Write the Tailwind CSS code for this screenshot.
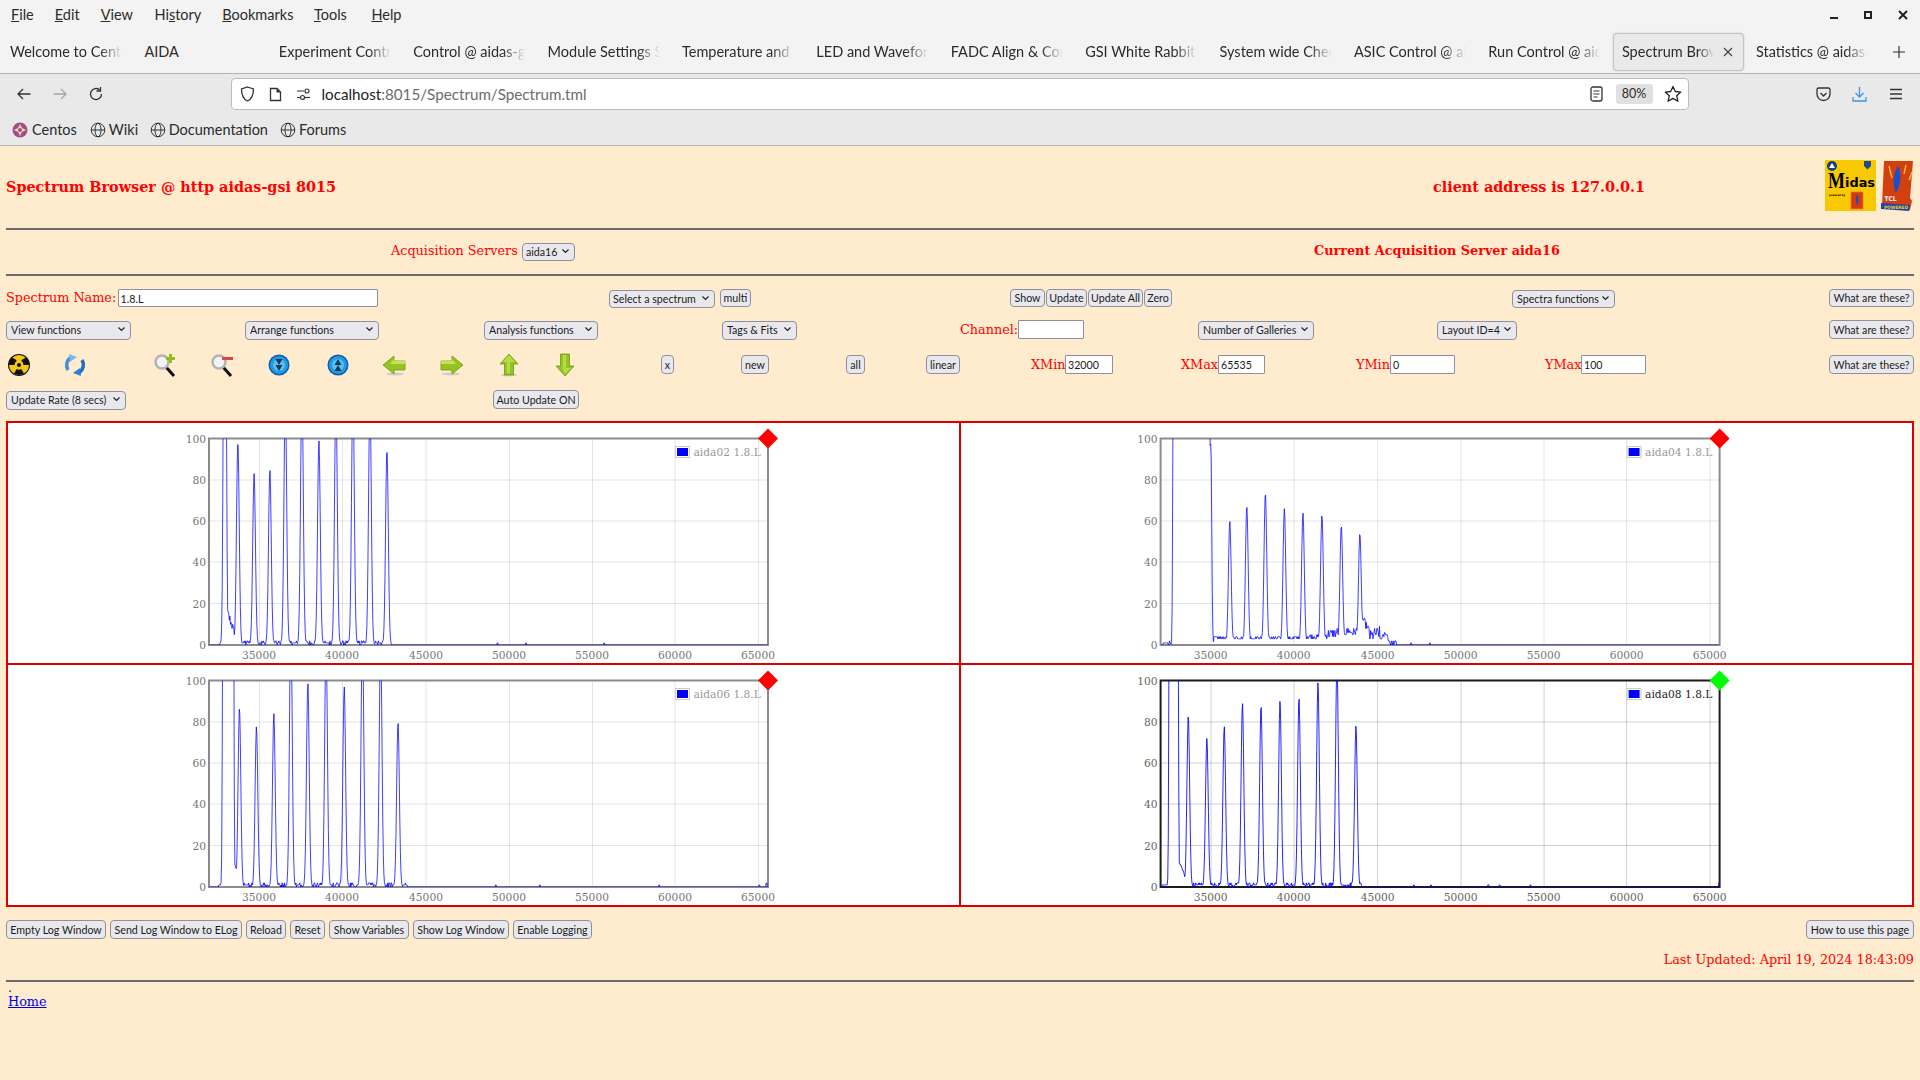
<!DOCTYPE html>
<html lang="en">
<head>
<meta charset="utf-8">
<title>Spectrum Browser</title>
<script src="https://cdn.jsdelivr.net/npm/@tailwindcss/browser@4"></script>
</head>
<body class="m-0 w-[1920px] h-[1080px] overflow-hidden bg-[#ffebcd] font-['DejaVu_Serif',serif] text-[12.8px]">

<!-- browser chrome -->
<div class="h-[147px] font-['Lato',sans-serif] text-[#2b2b2b]">
  <div class="h-[74px] bg-[#f3f3f3] border-b border-[#b3b3b3]">
    <div class="h-[30px] flex items-center text-[14.500px] pb-[1px]">
      <span class="ml-[11px]"><u>F</u>ile</span>
      <span class="ml-[21px]"><u>E</u>dit</span>
      <span class="ml-[21px]"><u>V</u>iew</span>
      <span class="ml-[21.500px]">Hi<u>s</u>tory</span>
      <span class="ml-[21px]"><u>B</u>ookmarks</span>
      <span class="ml-[20.500px]"><u>T</u>ools</span>
      <span class="ml-[24.500px]"><u>H</u>elp</span>
      <div class="ml-auto flex items-center mr-[12px]">
        <svg class="w-[10px] h-[10px]" viewBox="0 0 10 10"><rect x="1" y="7" width="8" height="2" fill="#222"/></svg>
        <svg class="w-[10px] h-[10px] ml-[24px]" viewBox="0 0 10 10"><rect x="2" y="2" width="6" height="6" fill="none" stroke="#222" stroke-width="2"/></svg>
        <svg class="w-[10px] h-[10px] ml-[25px]" viewBox="0 0 10 10"><path d="M1 1L9 9M9 1L1 9" stroke="#222" stroke-width="2"/></svg>
      </div>
    </div>
    <div class="h-[43px] flex items-center text-[14.500px]">
      <div class="w-[134.4px] pl-[10px] shrink-0"><div class="w-[112px] overflow-hidden whitespace-nowrap [mask-image:linear-gradient(to_right,black_80%,transparent)]">Welcome to CentOS</div></div>
      <div class="w-[134.4px] pl-[10px] shrink-0"><div class="w-[112px] overflow-hidden whitespace-nowrap">AIDA</div></div>
      <div class="w-[134.4px] pl-[10px] shrink-0"><div class="w-[112px] overflow-hidden whitespace-nowrap [mask-image:linear-gradient(to_right,black_80%,transparent)]">Experiment Control</div></div>
      <div class="w-[134.4px] pl-[10px] shrink-0"><div class="w-[112px] overflow-hidden whitespace-nowrap [mask-image:linear-gradient(to_right,black_80%,transparent)]">Control @ aidas-gsi</div></div>
      <div class="w-[134.4px] pl-[10px] shrink-0"><div class="w-[112px] overflow-hidden whitespace-nowrap [mask-image:linear-gradient(to_right,black_80%,transparent)]">Module Settings Summary</div></div>
      <div class="w-[134.4px] pl-[10px] shrink-0"><div class="w-[112px] overflow-hidden whitespace-nowrap [mask-image:linear-gradient(to_right,black_80%,transparent)]">Temperature and Voltage</div></div>
      <div class="w-[134.4px] pl-[10px] shrink-0"><div class="w-[112px] overflow-hidden whitespace-nowrap [mask-image:linear-gradient(to_right,black_80%,transparent)]">LED and Waveform</div></div>
      <div class="w-[134.4px] pl-[10px] shrink-0"><div class="w-[112px] overflow-hidden whitespace-nowrap [mask-image:linear-gradient(to_right,black_80%,transparent)]">FADC Align &amp; Control</div></div>
      <div class="w-[134.4px] pl-[10px] shrink-0"><div class="w-[112px] overflow-hidden whitespace-nowrap [mask-image:linear-gradient(to_right,black_80%,transparent)]">GSI White Rabbit Timing</div></div>
      <div class="w-[134.4px] pl-[10px] shrink-0"><div class="w-[112px] overflow-hidden whitespace-nowrap [mask-image:linear-gradient(to_right,black_80%,transparent)]">System wide Checks</div></div>
      <div class="w-[134.4px] pl-[10px] shrink-0"><div class="w-[112px] overflow-hidden whitespace-nowrap [mask-image:linear-gradient(to_right,black_80%,transparent)]">ASIC Control @ aidas</div></div>
      <div class="w-[134.6px] pl-[10px] shrink-0"><div class="w-[112px] overflow-hidden whitespace-nowrap [mask-image:linear-gradient(to_right,black_80%,transparent)]">Run Control @ aidas</div></div>
      <div class="w-[131px] h-[38px] shrink-0 flex items-center pl-[8px] bg-[#e9e9e9] border border-[#c4c4c4] rounded-[4px] shadow-[0_0_2px_rgba(0,0,0,0.2)]"><div class="w-[92px] overflow-hidden whitespace-nowrap [mask-image:linear-gradient(to_right,black_82%,transparent)]">Spectrum Browser</div><svg class="w-[10px] h-[10px] ml-[9px]" viewBox="0 0 10 10"><path d="M1 1L9 9M9 1L1 9" stroke="#444" stroke-width="1.2"/></svg></div>
      <div class="w-[149px] pl-[12px] shrink-0"><div class="w-[112px] overflow-hidden whitespace-nowrap [mask-image:linear-gradient(to_right,black_80%,transparent)]">Statistics @ aidas-gsi</div></div>
      <svg class="w-[12px] h-[12px] shrink-0" viewBox="0 0 12 12"><path d="M6 0V12M0 6H12" stroke="#333" stroke-width="1.2"/></svg>
    </div>
  </div>
  <div class="h-[72px] bg-[#e9e9e9] border-b border-[#b8b8b8]">
    <div class="h-[40px] flex items-center">
      <svg class="w-[16px] h-[16px] ml-[16px] shrink-0" viewBox="0 0 16 16"><path d="M14.5 8H2M7 3L2 8L7 13" fill="none" stroke="#333" stroke-width="1.3"/></svg>
      <svg class="w-[16px] h-[16px] ml-[20px] shrink-0" viewBox="0 0 16 16"><path d="M1.5 8H14M9 3L14 8L9 13" fill="none" stroke="#a5a5a5" stroke-width="1.3"/></svg>
      <svg class="w-[16px] h-[16px] ml-[20px] shrink-0" viewBox="0 0 16 16"><path d="M13.5 8A5.5 5.5 0 1 1 11.5 3.8M12.5 1V5H8.5" fill="none" stroke="#333" stroke-width="1.3"/></svg>
      <div class="ml-[127px] w-[1457.500px] h-[32px] shrink-0 bg-white border border-[#bdbdbd] rounded-[4px] flex items-center">
        <svg class="w-[15px] h-[16px] ml-[7.500px] shrink-0" viewBox="0 0 15 16"><path d="M7.5 1L13.5 3C13.5 9 12 13 7.5 15C3 13 1.5 9 1.5 3Z" fill="none" stroke="#333" stroke-width="1.3"/></svg>
        <svg class="w-[13px] h-[15px] ml-[14px] shrink-0" viewBox="0 0 13 15"><path d="M1.5 1.5H8L11.5 5V13.5H1.5Z" fill="none" stroke="#333" stroke-width="1.3"/><path d="M7.5 1.5V5.5H11.5" fill="#333"/></svg>
        <svg class="w-[15px] h-[14px] ml-[14px] shrink-0" viewBox="0 0 15 14"><path d="M1 4H8M1 10.500H4" stroke="#333" stroke-width="1.2"/><circle cx="11" cy="4" r="2" fill="none" stroke="#333" stroke-width="1.2"/><circle cx="6.500" cy="10.500" r="2" fill="none" stroke="#333" stroke-width="1.2"/><path d="M9 10.500H14" stroke="#333" stroke-width="1.2"/></svg>
        <span class="ml-[11px] text-[15.200px] whitespace-nowrap text-[#222]">localhost<span class="text-[#6c6c6c]">:8015/Spectrum/Spectrum.tml</span></span>
        <svg class="w-[13px] h-[16px] ml-auto shrink-0" viewBox="0 0 13 16"><rect x="1" y="1" width="11" height="14" rx="2" fill="none" stroke="#333" stroke-width="1.3"/><path d="M3.500 5H9.500M3.500 8H9.500M3.500 11H7.500" stroke="#333" stroke-width="1.2"/></svg>
        <div class="ml-[13px] w-[37px] h-[20px] bg-[#e0e0e0] rounded-[3px] text-[12.5px] flex items-center justify-center shrink-0">80%</div>
        <svg class="w-[18px] h-[18px] ml-[11px] mr-[6px] shrink-0" viewBox="0 0 18 18"><path d="M9 1.500L11.300 6.500L16.800 7.100L12.700 10.800L13.900 16.200L9 13.400L4.100 16.200L5.300 10.800L1.200 7.100L6.700 6.500Z" fill="none" stroke="#222" stroke-width="1.3" stroke-linejoin="round"/></svg>
      </div>
      <svg class="w-[15px] h-[15px] ml-[127.500px] shrink-0" viewBox="0 0 15 15"><path d="M1 2.500A1.500 1.500 0 0 1 2.500 1H12.500A1.500 1.500 0 0 1 14 2.500V7A6.500 6.500 0 0 1 1 7Z" fill="none" stroke="#333" stroke-width="1.3"/><path d="M4.500 6L7.500 9L10.500 6" fill="none" stroke="#333" stroke-width="1.3"/></svg>
      <svg class="w-[15px] h-[16px] ml-[21.400px] shrink-0" viewBox="0 0 15 16"><path d="M7.500 1V11M3.500 7L7.500 11L11.500 7M1 11V15H14V11" fill="none" stroke="#3f94e6" stroke-width="1.3"/></svg>
      <svg class="w-[14px] h-[12px] ml-[21.600px] shrink-0" viewBox="0 0 14 12"><path d="M1 1.500H13M1 6H13M1 10.500H13" stroke="#333" stroke-width="1.4"/></svg>
    </div>
    <div class="h-[31px] flex items-center text-[14.500px]">
      <svg class="w-[16px] h-[16px] ml-[12px] shrink-0" viewBox="0 0 16 16"><circle cx="8" cy="8" r="7.500" fill="#a14f8c"/><path d="M8 2L10 6L14 8L10 10L8 14L6 10L2 8L6 6Z" fill="#f0d7b0"/><circle cx="8" cy="8" r="2" fill="#a14f8c"/></svg>
      <span class="ml-[4px]">Centos</span>
      <svg class="w-[16px] h-[16px] ml-[13px] shrink-0" viewBox="0 0 16 16"><g fill="none" stroke="#333" stroke-width="1"><circle cx="8" cy="8" r="6.800"/><ellipse cx="8" cy="8" rx="3" ry="6.800"/><path d="M1.200 8H14.800"/></g></svg>
      <span class="ml-[3px]">Wiki</span>
      <svg class="w-[16px] h-[16px] ml-[11.500px] shrink-0" viewBox="0 0 16 16"><g fill="none" stroke="#333" stroke-width="1"><circle cx="8" cy="8" r="6.800"/><ellipse cx="8" cy="8" rx="3" ry="6.800"/><path d="M1.200 8H14.800"/></g></svg>
      <span class="ml-[3px]">Documentation</span>
      <svg class="w-[16px] h-[16px] ml-[12px] shrink-0" viewBox="0 0 16 16"><g fill="none" stroke="#333" stroke-width="1"><circle cx="8" cy="8" r="6.800"/><ellipse cx="8" cy="8" rx="3" ry="6.800"/><path d="M1.200 8H14.800"/></g></svg>
      <span class="ml-[3px]">Forums</span>
    </div>
  </div>
</div>

<!-- page -->
<div class="h-[81px] flex items-center text-[#ff0000] font-bold text-[14.400px]">
  <span class="ml-[6px] w-[1427px] shrink-0 whitespace-nowrap pb-[1px]">Spectrum Browser @ http aidas-gsi 8015</span>
  <span class="whitespace-nowrap w-[392px] shrink-0 pb-[1px]">client address is 127.0.0.1</span>
  <svg class="w-[51px] h-[51px] shrink-0 mb-[4px] font-normal" viewBox="0 0 51 51">
    <rect width="51" height="51" fill="#f8c800"/>
    <circle cx="7" cy="6" r="5" fill="#14427a"/><path d="M4 8L7 3L10 8Z" fill="#fff"/>
    <path d="M39 1H46V6L42.500 9.500L39 6Z" fill="#24488c"/>
    <text x="3" y="28" font-family="Liberation Serif" font-weight="700" font-size="24" fill="#000" textLength="17" lengthAdjust="spacingAndGlyphs">M</text>
    <text x="20" y="27" font-family="DejaVu Sans" font-weight="700" font-size="12" fill="#000" textLength="30" lengthAdjust="spacingAndGlyphs">idas</text>
    <text x="4" y="36" font-family="DejaVu Sans" font-size="2.800" fill="#000" font-weight="700" textLength="16" lengthAdjust="spacingAndGlyphs">powered by</text>
    <rect x="26" y="32" width="12" height="17" fill="#d53a12" stroke="#e8861a" stroke-width="0.800"/><path d="M32 34C30 38 31 42 32 46C34 41 34 37 32 34Z" fill="#1b4fb5"/>
  </svg>
  <svg class="ml-[5px] w-[33px] h-[52px] shrink-0 mb-[4px] font-normal" viewBox="0 0 33 52">
    <path d="M3 1H32L29 38L31 41L29 50L1 46Z" fill="#d43f10"/>
    <path d="M17 6C12 14 11 24 15 33C20 25 21 12 17 6Z" fill="#1b4fc5"/>
    <path d="M8 6L11 18M25 5L23 14M31 12L28 20" stroke="#f6b23a" stroke-width="1.500"/>
    <text x="3.500" y="41" font-family="DejaVu Sans" font-weight="700" font-size="6.500" fill="#fff" textLength="12" lengthAdjust="spacingAndGlyphs">TCL</text>
    <path d="M0 43L29 45L28 51L0 49Z" fill="#1a44b8"/>
    <text x="3" y="49" font-family="DejaVu Sans" font-weight="700" font-size="4.500" fill="#f8c800" textLength="24" lengthAdjust="spacingAndGlyphs">POWERED</text>
  </svg>
</div>
<div class="ml-[6px] w-[1908px] h-[2px] bg-[#6b6b6b]"></div>
<div class="h-[44px] flex items-center text-[#ff0000] pb-[2px]">
  <span class="ml-[391px] w-[131px] shrink-0 whitespace-nowrap">Acquisition Servers</span>
  <div class="relative w-[53px] h-[18px] shrink-0"><select class="w-full h-full appearance-none rounded-[4px] border border-[#8f8f9d] bg-[#e9e9ed] pl-[3px] text-[10.67px] font-['Lato',sans-serif] text-[#1b1b1b]"><option>aida16</option></select><svg class="absolute right-[6px] top-[7px] w-[7px] h-[5px]" viewBox="0 0 7 5"><path d="M0.500 0.500L3.500 3.500L6.500 0.500" fill="none" stroke="#222" stroke-width="1.200"/></svg></div>
  <span class="ml-[739px] font-bold whitespace-nowrap">Current Acquisition Server aida16</span>
</div>
<div class="ml-[6px] w-[1908px] h-[2px] bg-[#6b6b6b]"></div>

<!-- row: spectrum name -->
<div class="mt-[13px] h-[18px] ml-[6px] flex items-center text-[#ff0000]">
  <span class="w-[111.500px] shrink-0 whitespace-nowrap">Spectrum Name:</span>
  <input value="1.8.L" class="w-[260px] h-[18px] shrink-0 bg-white border border-[#8f8f9d] rounded-[1px] pl-[2px] text-[10.67px] font-['Lato',sans-serif] text-[#1b1b1b]">
  <div class="relative ml-[231.500px] w-[106px] h-[18px] shrink-0"><select class="w-full h-full appearance-none rounded-[4px] border border-[#8f8f9d] bg-[#e9e9ed] pl-[3px] text-[10.67px] font-['Lato',sans-serif] text-[#1b1b1b]"><option>Select a spectrum</option></select><svg class="absolute right-[6px] top-[7px] w-[7px] h-[5px]" viewBox="0 0 7 5"><path d="M0.500 0.500L3.500 3.500L6.500 0.500" fill="none" stroke="#222" stroke-width="1.200"/></svg></div>
  <button class="ml-[5px] w-[31px] h-[18px] shrink-0 rounded-[4px] border border-[#8f8f9d] bg-[#e9e9ed] text-[10.67px] font-['Lato',sans-serif] text-[#1b1b1b] whitespace-nowrap">multi</button>
  <button class="ml-[259px] w-[35px] h-[18px] shrink-0 rounded-[4px] border border-[#8f8f9d] bg-[#e9e9ed] text-[10.67px] font-['Lato',sans-serif] text-[#1b1b1b] whitespace-nowrap">Show</button>
  <button class="ml-[1px] w-[41px] h-[18px] shrink-0 rounded-[4px] border border-[#8f8f9d] bg-[#e9e9ed] text-[10.67px] font-['Lato',sans-serif] text-[#1b1b1b] whitespace-nowrap">Update</button>
  <button class="ml-[1px] w-[55px] h-[18px] shrink-0 rounded-[4px] border border-[#8f8f9d] bg-[#e9e9ed] text-[10.67px] font-['Lato',sans-serif] text-[#1b1b1b] whitespace-nowrap">Update All</button>
  <button class="ml-[1px] w-[28px] h-[18px] shrink-0 rounded-[4px] border border-[#8f8f9d] bg-[#e9e9ed] text-[10.67px] font-['Lato',sans-serif] text-[#1b1b1b] whitespace-nowrap">Zero</button>
  <div class="relative ml-[340px] w-[103px] h-[18px] shrink-0"><select class="w-full h-full appearance-none rounded-[4px] border border-[#8f8f9d] bg-[#e9e9ed] pl-[4px] text-[10.67px] font-['Lato',sans-serif] text-[#1b1b1b]"><option>Spectra functions</option></select><svg class="absolute right-[6px] top-[7px] w-[7px] h-[5px]" viewBox="0 0 7 5"><path d="M0.500 0.500L3.500 3.500L6.500 0.500" fill="none" stroke="#222" stroke-width="1.200"/></svg></div>
  <button class="ml-[214px] w-[85px] h-[18px] shrink-0 rounded-[4px] border border-[#8f8f9d] bg-[#e9e9ed] text-[10.67px] font-['Lato',sans-serif] text-[#1b1b1b] whitespace-nowrap">What are these?</button>
</div>

<!-- row: function selects -->
<div class="mt-[13px] h-[19px] ml-[6px] flex items-center text-[#ff0000]">
  <div class="relative w-[125px] h-[19px] shrink-0"><select class="w-full h-full appearance-none rounded-[4px] border border-[#8f8f9d] bg-[#e9e9ed] pl-[4px] text-[10.67px] font-['Lato',sans-serif] text-[#1b1b1b]"><option>View functions</option></select><svg class="absolute right-[6px] top-[7px] w-[7px] h-[5px]" viewBox="0 0 7 5"><path d="M0.500 0.500L3.500 3.500L6.500 0.500" fill="none" stroke="#222" stroke-width="1.200"/></svg></div>
  <div class="relative ml-[114px] w-[134px] h-[19px] shrink-0"><select class="w-full h-full appearance-none rounded-[4px] border border-[#8f8f9d] bg-[#e9e9ed] pl-[4px] text-[10.67px] font-['Lato',sans-serif] text-[#1b1b1b]"><option>Arrange functions</option></select><svg class="absolute right-[6px] top-[7px] w-[7px] h-[5px]" viewBox="0 0 7 5"><path d="M0.500 0.500L3.500 3.500L6.500 0.500" fill="none" stroke="#222" stroke-width="1.200"/></svg></div>
  <div class="relative ml-[105px] w-[114px] h-[19px] shrink-0"><select class="w-full h-full appearance-none rounded-[4px] border border-[#8f8f9d] bg-[#e9e9ed] pl-[4px] text-[10.67px] font-['Lato',sans-serif] text-[#1b1b1b]"><option>Analysis functions</option></select><svg class="absolute right-[6px] top-[7px] w-[7px] h-[5px]" viewBox="0 0 7 5"><path d="M0.500 0.500L3.500 3.500L6.500 0.500" fill="none" stroke="#222" stroke-width="1.200"/></svg></div>
  <div class="relative ml-[124px] w-[75px] h-[19px] shrink-0"><select class="w-full h-full appearance-none rounded-[4px] border border-[#8f8f9d] bg-[#e9e9ed] pl-[4px] text-[10.67px] font-['Lato',sans-serif] text-[#1b1b1b]"><option>Tags &amp; Fits</option></select><svg class="absolute right-[6px] top-[7px] w-[7px] h-[5px]" viewBox="0 0 7 5"><path d="M0.500 0.500L3.500 3.500L6.500 0.500" fill="none" stroke="#222" stroke-width="1.200"/></svg></div>
  <span class="ml-[163px] w-[58px] shrink-0 whitespace-nowrap">Channel:</span>
  <input class="w-[66px] h-[19px] shrink-0 bg-white border border-[#8f8f9d] rounded-[1px] pl-[2px] text-[10.67px] font-['Lato',sans-serif] text-[#1b1b1b]">
  <div class="relative ml-[114px] w-[116px] h-[19px] shrink-0"><select class="w-full h-full appearance-none rounded-[4px] border border-[#8f8f9d] bg-[#e9e9ed] pl-[4px] text-[10.67px] font-['Lato',sans-serif] text-[#1b1b1b]"><option>Number of Galleries</option></select><svg class="absolute right-[6px] top-[7px] w-[7px] h-[5px]" viewBox="0 0 7 5"><path d="M0.500 0.500L3.500 3.500L6.500 0.500" fill="none" stroke="#222" stroke-width="1.200"/></svg></div>
  <div class="relative ml-[123px] w-[80px] h-[19px] shrink-0"><select class="w-full h-full appearance-none rounded-[4px] border border-[#8f8f9d] bg-[#e9e9ed] pl-[4px] text-[10.67px] font-['Lato',sans-serif] text-[#1b1b1b]"><option>Layout ID=4</option></select><svg class="absolute right-[6px] top-[7px] w-[7px] h-[5px]" viewBox="0 0 7 5"><path d="M0.500 0.500L3.500 3.500L6.500 0.500" fill="none" stroke="#222" stroke-width="1.200"/></svg></div>
  <button class="ml-[312px] w-[85px] h-[19px] shrink-0 rounded-[4px] border border-[#8f8f9d] bg-[#e9e9ed] text-[10.67px] font-['Lato',sans-serif] text-[#1b1b1b] whitespace-nowrap">What are these?</button>
</div>

<!-- row: icons -->
<div class="mt-[16px] h-[19px] ml-[6px] flex items-center text-[#ff0000]">
  <svg class="ml-[1px] w-[24px] h-[24px] shrink-0" viewBox="0 0 24 24">
    <circle cx="12" cy="12" r="11" fill="#111"/><circle cx="12" cy="12" r="10" fill="#f5c518"/>
    <path d="M9 6.800L4.500 4.200A10 10 0 0 0 2.100 12H7.500A4.500 4.500 0 0 1 9.700 8Z M15 6.800L19.500 4.200A10 10 0 0 1 21.900 12H16.500A4.500 4.500 0 0 0 14.300 8Z M9.700 16L7 20.600A10 10 0 0 0 17 20.600L14.300 16A4.500 4.500 0 0 1 9.700 16Z" fill="#111"/>
    <circle cx="12" cy="12" r="2" fill="#111"/>
  </svg>
  <svg class="ml-[32px] w-[24px] h-[24px] shrink-0" viewBox="0 0 24 24">
    <path d="M5 17A9 9 0 0 1 8 4.500" fill="none" stroke="#3f8fdc" stroke-width="3.500"/><path d="M6 1L14 4L7 9Z" fill="#7cb8ea"/>
    <path d="M19 7A9 9 0 0 1 16 19.500" fill="none" stroke="#1d6fc4" stroke-width="3.500"/><path d="M18 23L10 20L17 15Z" fill="#2f80d2"/>
  </svg>
  <svg class="ml-[66px] w-[24px] h-[24px] shrink-0" viewBox="0 0 24 24">
    <path d="M13 14L21 23" stroke="#111" stroke-width="3"/>
    <circle cx="9" cy="9" r="6.500" fill="#f1f4f6" stroke="#b3b3b3" stroke-width="2.500"/>
    <path d="M17.500 1V10M13 5.500H22" stroke="#8fbf1f" stroke-width="3"/>
  </svg>
  <svg class="ml-[33px] w-[24px] h-[24px] shrink-0" viewBox="0 0 24 24">
    <path d="M13 14L21 23" stroke="#111" stroke-width="3"/>
    <circle cx="9" cy="9" r="6.500" fill="#f1f4f6" stroke="#b3b3b3" stroke-width="2.500"/>
    <path d="M12 5.500H23" stroke="#d84a3c" stroke-width="3"/>
  </svg>
  <svg class="ml-[33px] w-[24px] h-[24px] shrink-0" viewBox="0 0 24 24">
    <circle cx="12" cy="12" r="10.500" fill="#0f5fa8"/><circle cx="12" cy="12" r="9" fill="#1f9ae6"/><circle cx="12" cy="12" r="6" fill="#5dbcf2"/>
    <path d="M8.500 6H15.500L12 12Z M8.500 12H15.500L12 18Z" fill="#143c5c"/>
  </svg>
  <svg class="ml-[35px] w-[24px] h-[24px] shrink-0" viewBox="0 0 24 24">
    <circle cx="12" cy="12" r="10.500" fill="#0f5fa8"/><circle cx="12" cy="12" r="9" fill="#1f9ae6"/><circle cx="12" cy="12" r="6" fill="#5dbcf2"/>
    <path d="M8.500 12H15.500L12 6Z M8.500 18H15.500L12 12Z" fill="#143c5c"/>
  </svg>
  <svg class="ml-[32px] w-[24px] h-[24px] shrink-0" viewBox="0 0 24 24">
    <ellipse cx="13" cy="21" rx="9" ry="1.500" fill="#ccc"/>
    <path d="M1 12L12 3V8H23V17H12V21Z" fill="#93c41f" stroke="#6c9a10" stroke-width="0.800"/><path d="M12 8H23V11H8L12 6Z" fill="#c7e15a"/>
  </svg>
  <svg class="ml-[34px] w-[24px] h-[24px] shrink-0" viewBox="0 0 24 24">
    <ellipse cx="11" cy="21" rx="9" ry="1.500" fill="#ccc"/>
    <path d="M23 12L12 3V8H1V17H12V21Z" fill="#93c41f" stroke="#6c9a10" stroke-width="0.800"/><path d="M12 8H1V11H16L12 6Z" fill="#c7e15a"/>
  </svg>
  <svg class="ml-[33px] w-[24px] h-[24px] shrink-0" viewBox="0 0 24 24">
    <ellipse cx="12" cy="22" rx="8" ry="1.500" fill="#ccc"/>
    <path d="M12 1L21 11H16.500V22H7.500V11H3Z" fill="#93c41f" stroke="#6c9a10" stroke-width="0.800"/><path d="M12 2L18 9H13V20H10V9H6Z" fill="#b9da48"/>
  </svg>
  <svg class="ml-[32px] w-[24px] h-[24px] shrink-0" viewBox="0 0 24 24">
    <path d="M12 23L21 13H16.500V1H7.500V13H3Z" fill="#93c41f" stroke="#6c9a10" stroke-width="0.800"/><path d="M10 2H13V15H18L12 21L10 17Z" fill="#b9da48"/>
  </svg>
  <button class="ml-[84px] w-[13px] h-[19px] shrink-0 rounded-[4px] border border-[#8f8f9d] bg-[#e9e9ed] text-[10.67px] font-['Lato',sans-serif] text-[#1b1b1b] whitespace-nowrap">x</button>
  <button class="ml-[67px] w-[28px] h-[19px] shrink-0 rounded-[4px] border border-[#8f8f9d] bg-[#e9e9ed] text-[10.67px] font-['Lato',sans-serif] text-[#1b1b1b] whitespace-nowrap">new</button>
  <button class="ml-[77px] w-[19px] h-[19px] shrink-0 rounded-[4px] border border-[#8f8f9d] bg-[#e9e9ed] text-[10.67px] font-['Lato',sans-serif] text-[#1b1b1b] whitespace-nowrap">all</button>
  <button class="ml-[61px] w-[34px] h-[19px] shrink-0 rounded-[4px] border border-[#8f8f9d] bg-[#e9e9ed] text-[10.67px] font-['Lato',sans-serif] text-[#1b1b1b] whitespace-nowrap">linear</button>
  <span class="ml-[71px] w-[34px] shrink-0 whitespace-nowrap">XMin</span>
  <input value="32000" class="w-[48px] h-[19px] shrink-0 bg-white border border-[#8f8f9d] rounded-[1px] pl-[2px] text-[10.67px] font-['Lato',sans-serif] text-[#1b1b1b]">
  <span class="ml-[68px] w-[37px] shrink-0 whitespace-nowrap">XMax</span>
  <input value="65535" class="w-[47px] h-[19px] shrink-0 bg-white border border-[#8f8f9d] rounded-[1px] pl-[2px] text-[10.67px] font-['Lato',sans-serif] text-[#1b1b1b]">
  <span class="ml-[91px] w-[34px] shrink-0 whitespace-nowrap">YMin</span>
  <input value="0" class="w-[65px] h-[19px] shrink-0 bg-white border border-[#8f8f9d] rounded-[1px] pl-[2px] text-[10.67px] font-['Lato',sans-serif] text-[#1b1b1b]">
  <span class="ml-[90px] w-[36px] shrink-0 whitespace-nowrap">YMax</span>
  <input value="100" class="w-[65px] h-[19px] shrink-0 bg-white border border-[#8f8f9d] rounded-[1px] pl-[2px] text-[10.67px] font-['Lato',sans-serif] text-[#1b1b1b]">
  <button class="ml-[183px] w-[85px] h-[19px] shrink-0 rounded-[4px] border border-[#8f8f9d] bg-[#e9e9ed] text-[10.67px] font-['Lato',sans-serif] text-[#1b1b1b] whitespace-nowrap">What are these?</button>
</div>

<!-- row: update rate -->
<div class="mt-[16px] h-[19px] ml-[6px] flex items-center">
  <div class="relative w-[120px] h-[19px] shrink-0"><select class="w-full h-full appearance-none rounded-[4px] border border-[#8f8f9d] bg-[#e9e9ed] pl-[4px] text-[10.67px] font-['Lato',sans-serif] text-[#1b1b1b]"><option>Update Rate (8 secs)</option></select><svg class="absolute right-[6px] top-[7px] w-[7px] h-[5px]" viewBox="0 0 7 5"><path d="M0.500 0.500L3.500 3.500L6.500 0.500" fill="none" stroke="#222" stroke-width="1.200"/></svg></div>
  <button class="ml-[367px] w-[86px] h-[19px] shrink-0 rounded-[4px] border border-[#8f8f9d] bg-[#e9e9ed] text-[10.67px] font-['Lato',sans-serif] text-[#1b1b1b] whitespace-nowrap">Auto Update ON</button>
</div>

<!-- charts -->
<div class="mt-[12px] ml-[6px] w-[1908px] h-[486px] border-2 border-[#dc0000] bg-[#dc0000] grid grid-cols-2 grid-rows-2 gap-[2px]">
  <div class="bg-white relative overflow-hidden">
    <svg class="w-[951px] h-[240px] block" viewBox="0 0 951 240"><g transform="translate(201,0)" font-family="DejaVu Serif" font-size="10.670">
      <clipPath id="c1"><rect x="0" y="15.500" width="559" height="206.500"/></clipPath>
      <g stroke="#000" stroke-opacity="0.100"><path d="M50.500 15V222M133.500 15V222M217 15V222M300.500 15V222M383.500 15V222M466 15V222M549.500 15V222M0 57H559M0 98H559M0 139H559M0 180.500H559"/></g>
      <rect x="0" y="15.500" width="559" height="206.500" fill="none" stroke="#8c8c8c" stroke-width="2"/>
      <path id="p1" clip-path="url(#c1)" fill="none" stroke="#0000ff" stroke-opacity="0.750" stroke-width="1"/>
      <g fill="#777" text-anchor="middle"><text x="50" y="236">35000</text><text x="133" y="236">40000</text><text x="217" y="236">45000</text><text x="300" y="236">50000</text><text x="383" y="236">55000</text><text x="466" y="236">60000</text><text x="549" y="236">65000</text></g>
      <g fill="#777" text-anchor="end"><text x="-3" y="226">0</text><text x="-3" y="185">20</text><text x="-3" y="143">40</text><text x="-3" y="102">60</text><text x="-3" y="61">80</text><text x="-3" y="20">100</text></g>
      <rect x="466.500" y="23.500" width="14" height="11" fill="#fff" stroke="#ccc"/><rect x="468" y="25" width="11" height="8" fill="#0000ff"/>
      <text x="484.500" y="33" fill="#999">aida02 1.8.L</text>
      <path d="M559 5.500L569 15.500L559 25.500L549 15.500Z" fill="#ff0000"/>
    </g></svg>
  </div>
  <div class="bg-white relative overflow-hidden">
    <svg class="w-[951px] h-[240px] block" viewBox="0 0 951 240"><g transform="translate(199.600,0)" font-family="DejaVu Serif" font-size="10.670">
      <clipPath id="c2"><rect x="0" y="15.500" width="559" height="206.500"/></clipPath>
      <g stroke="#000" stroke-opacity="0.100"><path d="M50.500 15V222M133.500 15V222M217 15V222M300.500 15V222M383.500 15V222M466 15V222M549.500 15V222M0 57H559M0 98H559M0 139H559M0 180.500H559"/></g>
      <rect x="0" y="15.500" width="559" height="206.500" fill="none" stroke="#8c8c8c" stroke-width="2"/>
      <path id="p2" clip-path="url(#c2)" fill="none" stroke="#0000ff" stroke-opacity="0.750" stroke-width="1"/>
      <g fill="#777" text-anchor="middle"><text x="50" y="236">35000</text><text x="133" y="236">40000</text><text x="217" y="236">45000</text><text x="300" y="236">50000</text><text x="383" y="236">55000</text><text x="466" y="236">60000</text><text x="549" y="236">65000</text></g>
      <g fill="#777" text-anchor="end"><text x="-3" y="226">0</text><text x="-3" y="185">20</text><text x="-3" y="143">40</text><text x="-3" y="102">60</text><text x="-3" y="61">80</text><text x="-3" y="20">100</text></g>
      <rect x="466.500" y="23.500" width="14" height="11" fill="#fff" stroke="#ccc"/><rect x="468" y="25" width="11" height="8" fill="#0000ff"/>
      <text x="484.500" y="33" fill="#999">aida04 1.8.L</text>
      <path d="M559 5.500L569 15.500L559 25.500L549 15.500Z" fill="#ff0000"/>
    </g></svg>
  </div>
  <div class="bg-white relative overflow-hidden">
    <svg class="w-[951px] h-[240px] block" viewBox="0 0 951 240"><g transform="translate(201,0)" font-family="DejaVu Serif" font-size="10.670">
      <clipPath id="c3"><rect x="0" y="15.500" width="559" height="206.500"/></clipPath>
      <g stroke="#000" stroke-opacity="0.100"><path d="M50.500 15V222M133.500 15V222M217 15V222M300.500 15V222M383.500 15V222M466 15V222M549.500 15V222M0 57H559M0 98H559M0 139H559M0 180.500H559"/></g>
      <rect x="0" y="15.500" width="559" height="206.500" fill="none" stroke="#8c8c8c" stroke-width="2"/>
      <path id="p3" clip-path="url(#c3)" fill="none" stroke="#0000ff" stroke-opacity="0.750" stroke-width="1"/>
      <g fill="#777" text-anchor="middle"><text x="50" y="236">35000</text><text x="133" y="236">40000</text><text x="217" y="236">45000</text><text x="300" y="236">50000</text><text x="383" y="236">55000</text><text x="466" y="236">60000</text><text x="549" y="236">65000</text></g>
      <g fill="#777" text-anchor="end"><text x="-3" y="226">0</text><text x="-3" y="185">20</text><text x="-3" y="143">40</text><text x="-3" y="102">60</text><text x="-3" y="61">80</text><text x="-3" y="20">100</text></g>
      <rect x="466.500" y="23.500" width="14" height="11" fill="#fff" stroke="#ccc"/><rect x="468" y="25" width="11" height="8" fill="#0000ff"/>
      <text x="484.500" y="33" fill="#999">aida06 1.8.L</text>
      <path d="M559 5.500L569 15.500L559 25.500L549 15.500Z" fill="#ff0000"/>
    </g></svg>
  </div>
  <div class="bg-white relative overflow-hidden">
    <svg class="w-[951px] h-[240px] block" viewBox="0 0 951 240"><g transform="translate(199.600,0)" font-family="DejaVu Serif" font-size="10.670">
      <clipPath id="c4"><rect x="0" y="15.500" width="559" height="206.500"/></clipPath>
      <g stroke="#000" stroke-opacity="0.180"><path d="M50.500 15V222M133.500 15V222M217 15V222M300.500 15V222M383.500 15V222M466 15V222M549.500 15V222M0 57H559M0 98H559M0 139H559M0 180.500H559"/></g>
      <rect x="0" y="15.500" width="559" height="206.500" fill="none" stroke="#1c1c1c" stroke-width="2"/>
      <path id="p4" clip-path="url(#c4)" fill="none" stroke="#0000ff" stroke-opacity="0.850" stroke-width="1"/>
      <g fill="#666" text-anchor="middle"><text x="50" y="236">35000</text><text x="133" y="236">40000</text><text x="217" y="236">45000</text><text x="300" y="236">50000</text><text x="383" y="236">55000</text><text x="466" y="236">60000</text><text x="549" y="236">65000</text></g>
      <g fill="#666" text-anchor="end"><text x="-3" y="226">0</text><text x="-3" y="185">20</text><text x="-3" y="143">40</text><text x="-3" y="102">60</text><text x="-3" y="61">80</text><text x="-3" y="20">100</text></g>
      <rect x="466.500" y="23.500" width="14" height="11" fill="#fff" stroke="#ccc"/><rect x="468" y="25" width="11" height="8" fill="#0000ff"/>
      <text x="484.500" y="33" fill="#222">aida08 1.8.L</text>
      <path d="M559 5.500L569 15.500L559 25.500L549 15.500Z" fill="#00ff00"/>
    </g></svg>
  </div>
</div>

<!-- bottom buttons -->
<div class="mt-[13px] h-[19px] ml-[6px] flex items-center">
  <button class="w-[100px] h-[19px] shrink-0 rounded-[4px] border border-[#8f8f9d] bg-[#e9e9ed] text-[10.67px] font-['Lato',sans-serif] text-[#1b1b1b] whitespace-nowrap">Empty Log Window</button>
  <button class="ml-[4px] w-[132px] h-[19px] shrink-0 rounded-[4px] border border-[#8f8f9d] bg-[#e9e9ed] text-[10.67px] font-['Lato',sans-serif] text-[#1b1b1b] whitespace-nowrap">Send Log Window to ELog</button>
  <button class="ml-[4px] w-[40px] h-[19px] shrink-0 rounded-[4px] border border-[#8f8f9d] bg-[#e9e9ed] text-[10.67px] font-['Lato',sans-serif] text-[#1b1b1b] whitespace-nowrap">Reload</button>
  <button class="ml-[4px] w-[35px] h-[19px] shrink-0 rounded-[4px] border border-[#8f8f9d] bg-[#e9e9ed] text-[10.67px] font-['Lato',sans-serif] text-[#1b1b1b] whitespace-nowrap">Reset</button>
  <button class="ml-[4px] w-[80px] h-[19px] shrink-0 rounded-[4px] border border-[#8f8f9d] bg-[#e9e9ed] text-[10.67px] font-['Lato',sans-serif] text-[#1b1b1b] whitespace-nowrap">Show Variables</button>
  <button class="ml-[4px] w-[96px] h-[19px] shrink-0 rounded-[4px] border border-[#8f8f9d] bg-[#e9e9ed] text-[10.67px] font-['Lato',sans-serif] text-[#1b1b1b] whitespace-nowrap">Show Log Window</button>
  <button class="ml-[4px] w-[79px] h-[19px] shrink-0 rounded-[4px] border border-[#8f8f9d] bg-[#e9e9ed] text-[10.67px] font-['Lato',sans-serif] text-[#1b1b1b] whitespace-nowrap">Enable Logging</button>
  <button class="ml-auto mr-[6px] w-[108px] h-[19px] shrink-0 rounded-[4px] border border-[#8f8f9d] bg-[#e9e9ed] text-[10.67px] font-['Lato',sans-serif] text-[#1b1b1b] whitespace-nowrap">How to use this page</button>
</div>
<div class="mt-[12px] h-[18px] flex items-center justify-end pr-[6px] text-[#ff0000]">Last Updated: April 19, 2024 18:43:09</div>
<div class="mt-[11px] ml-[6px] w-[1908px] h-[2px] bg-[#6b6b6b]"></div>
<div class="ml-[8px] mt-[1px] h-[10px] text-[12.8px] leading-[10px] text-[#333]">.</div>
<a href="#" class="ml-[8px] mt-[1px] block leading-[16px] text-[#0000ee] underline">Home</a>

<script>
(function(){
  var seed=12345;
  function rnd(){seed=(seed*1103515245+12345)&0x7fffffff;return seed/0x7fffffff;}
  var data=[
    {id:'p1',o:73,block:[],peaks:[[113,300,1.2],[146,99],[187,83],[227,85],[266,120],[308,125],[351,99],[394,120],[437,125],[480,120],[523,95]],
     base:[[100,108,1,1,0],[117,138,17,6,2],[140,152,2,2,1],[152,530,1,1,1]],ticks:[[803,1],[875,1],[1072,1]]},
    {id:'p2',o:52,block:[[88,172]],peaks:[[174,78,0.6],[179,99,0.9],[227,60],[270,67],[317,74],[365,66],[412,64],[460,63],[509,58],[556,54]],
     base:[[58,84,1,1,1],[186,400,3.5,3.5,1],[400,470,4,4,1.5],[470,530,5,7,2],[530,556,6,7,2],[558,580,14,7,2],[580,606,4,6,3],[606,622,2,6,1],[622,634,6,0,1],[634,648,1,1,1]],ticks:[[685,1],[733,1]]},
    {id:'p3',o:73,block:[[112,131]],peaks:[[150,87],[193,78],[237,84],[280,130],[323,99],[369,120],[415,97],[461,125],[507,120],[551,80]],
     base:[[98,108,1,1,0],[134,146,14,6,0.5],[156,575,1,1,1]],ticks:[[799,1],[910,1],[1212,1],[1464,1],[1483,2]]},
    {id:'p4',o:52,block:[[78,92]],peaks:[[122,83],[169,72],[213,78],[259,89],[306,88],[354,90],[402,92],[450,99],[498,110],[546,78]],
     base:[[55,70,1,1,0.5],[96,116,14,4,0.5],[130,560,1,1,1]],ticks:[[692,1],[735,1],[881,1],[909,1],[988,1],[1464,2]]}
  ];
  data.forEach(function(c){
    var d='',k=2.529;
    for(var x=0;x<=559;x+=0.55){
      var zx=c.o+x*k,v=0;
      c.base.forEach(function(b){
        if(zx>=b[0]&&zx<=b[1]){var t=(zx-b[0])/(b[1]-b[0]);v=Math.max(v,Math.round(b[2]+(b[3]-b[2])*t+(rnd()-0.5)*2*b[4]));}
      });
      c.block.forEach(function(b){
        if(zx>=b[0]&&zx<=b[1])v=Math.max(v,1000);
        var e=Math.min(Math.abs(zx-b[0]),Math.abs(zx-b[1]))/k;
        v=Math.max(v,1000*Math.exp(-e*e/(2*0.9)));
      });
      c.peaks.forEach(function(p){
        var s=p[2]||1.35,e=(zx-p[0])/k;
        v=Math.max(v,p[1]*Math.exp(-e*e/(2*s*s)));
      });
      c.ticks.forEach(function(t){if(Math.abs(zx-t[0])<1.4)v=Math.max(v,t[1]);});
      var y=222-Math.min(v,140)*2.065;
      d+=(d?'L':'M')+x.toFixed(2)+' '+y.toFixed(1);
    }
    document.getElementById(c.id).setAttribute('d',d);
  });
})();
</script>
</body>
</html>
